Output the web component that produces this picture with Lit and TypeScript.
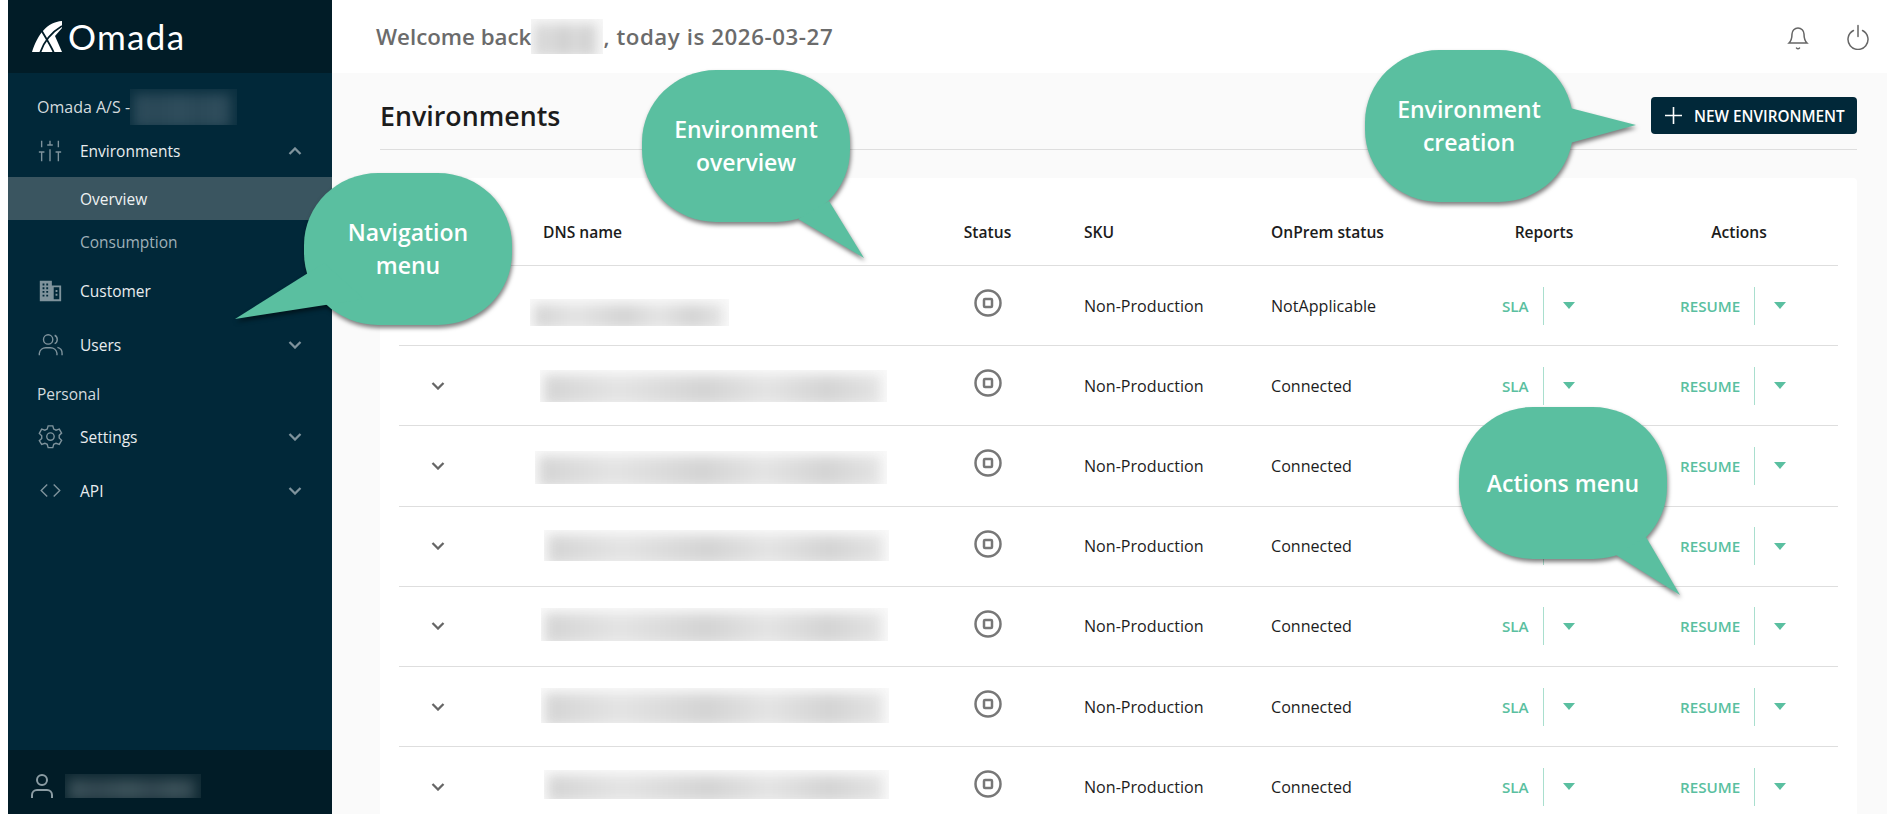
import { LitElement, html, css, svg } from "lit";
import { customElement, property } from "lit/decorators.js";

const chevron = (up = false) => html`<svg width="14" height="8" viewBox="0 0 14 8" fill="none" stroke="currentColor" stroke-width="2.3">
  <path d=${up ? "M1.5 7 7 1.5 12.5 7" : "M1.5 1 7 6.5 12.5 1"}></path></svg>`;

const navIcons: Record<string, unknown> = {
  sliders: svg`<path d="M4 3v7M4 15v10M1 15h6M13 3v4M13 12v13M10 7.5h6M22 3v7M22 15v10M19 15h6" />`,
  building: svg`<path fill="currentColor" stroke="none" fill-rule="evenodd" d="M2 3h13v5h10v17H2zM5 6v2h2V6zm4 0v2h2V6zM5 10v2h2v-2zm4 0v2h2v-2zm-4 4v2h2v-2zm4 0v2h2v-2zm-4 4v2h2v-2zm4 0v2h2v-2zm8-8v13h6V10zm2 3h2v2h-2zm0 4h2v2h-2z" />`,
  users: svg`<circle cx="11" cy="8" r="5" /><path d="M18 3.5a5 5 0 0 1 0 9M1.5 25v-2a7 7 0 0 1 7-6h5a7 7 0 0 1 7 6v2M21 16.5a6.500 6.500 0 0 1 5 6.500v2" />`,
  gear: svg`<circle cx="13.500" cy="13.500" r="4" /><path d="M11 2h5l1 3.500 2.500 1.200 3.500-1.200 2.500 4.300-2.600 2.500v2.800l2.600 2.500-2.500 4.300-3.500-1.200-2.500 1.200-1 3.500h-5l-1-3.500-2.500-1.200-3.500 1.200L1.500 18l2.600-2.500v-2.800L1.500 10.200 4 5.500l3.500 1.200L10 5.500z" />`,
  code: svg`<path d="M10 7 3.500 13.500 10 20M17 7l6.500 6.500L17 20" />`,
};

@customElement("call-out")
export class CallOut extends LitElement {
  static override styles = css`
    :host {
      position: absolute;
      display: flex;
      flex-direction: column;
      align-items: center;
      width: 208px;
      height: 152px;
      color: #fff;
      font-family: "Open Sans", "Noto Sans", sans-serif;
      font-size: 23px;
      font-weight: 600;
      line-height: 33px;
    }
    svg {
      position: absolute;
      inset: 0;
      overflow: visible;
      filter: drop-shadow(1px 3px 2px rgba(0, 0, 0, 0.5));
    }
    .label {
      position: relative;
      text-align: center;
      white-space: pre-line;
    }
  `;

  @property({ type: Number }) top = 0;
  @property({ type: Array }) tail: number[] = [];
  @property() text = "";

  override render() {
    return html`
      <svg width="208" height="152">
        <rect width="208" height="152" rx="74" ry="72" fill="#5abfa0"></rect>
        <polygon points=${this.tail.join(" ")} fill="#5abfa0"></polygon>
      </svg>
      <div class="label" style="margin-top:${this.top}px">${this.text}</div>
    `;
  }
}

// blur: left offset, width, height, top offset of the redacted host name
const rows = [
  { onprem: "NotApplicable", blur: [-13, 199, 27, 13] },
  { onprem: "Connected", blur: [-3, 347, 32, 0] },
  { onprem: "Connected", blur: [-8, 352, 33, 4] },
  { onprem: "Connected", blur: [1, 345, 31, -2] },
  { onprem: "Connected", blur: [-2, 347, 33, -4] },
  { onprem: "Connected", blur: [-2, 348, 35, -3] },
  { onprem: "Connected", blur: [1, 345, 29, -5] },
];

@customElement("app-root")
export class AppRoot extends LitElement {
  static override styles = css`
    :host {
      display: flex;
      position: relative;
      width: 1887px;
      height: 814px;
      overflow: hidden;
      background: #fff;
      padding-left: 8px;
      box-sizing: border-box;
      font-family: "Open Sans", "Noto Sans", sans-serif;
      color: #1c1c1c;
    }
    .sidebar {
      width: 324px;
      flex: none;
      display: flex;
      flex-direction: column;
      background: #012839;
      color: #e9edef;
      font-size: 15.500px;
    }
    .brand {
      height: 73px;
      flex: none;
      display: flex;
      align-items: center;
      gap: 6px;
      padding-left: 24px;
      background: #011c27;
      color: #fff;
    }
    .brand-name {
      font-family: Lato, sans-serif;
      font-size: 35px;
      line-height: 1;
      letter-spacing: 1.300px;
    }
    nav {
      flex: 1;
      padding-top: 16px;
    }
    .org {
      display: flex;
      align-items: center;
      height: 36px;
      padding-left: 29px;
      color: #d4dbde;
      font-size: 16px;
    }
    .org .smudge {
      width: 107px;
      height: 36px;
    }
    .item {
      display: flex;
      align-items: center;
      height: 54px;
      padding-left: 29px;
    }
    .item.first {
      height: 52px;
    }
    .item svg.icon {
      width: 26px;
      height: 26px;
      flex: none;
      margin-right: 17px;
      color: #7f939c;
      fill: none;
      stroke: currentColor;
      stroke-width: 1.500;
    }
    .item .name {
      flex: 1;
    }
    .item .caret {
      display: flex;
      margin-right: 30px;
      color: #7f939c;
    }
    .sub {
      display: flex;
      align-items: center;
      height: 43px;
      padding-left: 72px;
      color: #9fb0b8;
    }
    .sub.active {
      background: #3a5560;
      color: #eef2f3;
    }
    .sub.second {
      height: 44px;
    }
    .section {
      display: flex;
      align-items: center;
      height: 32px;
      margin-top: 6px;
      padding-left: 29px;
      color: #d4dbde;
    }
    .account {
      height: 64px;
      flex: none;
      display: flex;
      align-items: center;
      gap: 11px;
      padding: 8px 0 0 22px;
      box-sizing: border-box;
      background: #011c27;
      color: #8b9ca3;
    }
    .account .smudge {
      width: 136px;
      height: 24px;
    }
    .smudge {
      position: relative;
      overflow: hidden;
      flex: none;
      background: var(--tint);
    }
    .smudge::before {
      content: "";
      position: absolute;
      inset: 5px 6px -3px 4px;
      filter: blur(6px);
      background: linear-gradient(90deg, var(--ink) 0%, var(--ink2) 22%, var(--ink) 48%, var(--ink2) 66%, var(--ink) 84%, var(--ink2) 100%);
    }
    .sidebar .smudge {
      --tint: #0a2f3f;
      --ink: #2f4d5c;
      --ink2: #2a4857;
    }
    .account .smudge {
      --tint: #0e2832;
      --ink: #3b5159;
      --ink2: #31464f;
    }
    main {
      flex: 1;
      min-width: 0;
      display: flex;
      flex-direction: column;
      background: #fafafa;
    }
    .topbar {
      height: 73px;
      flex: none;
      display: flex;
      align-items: center;
      padding-left: 44px;
      background: #fff;
      color: #6b6b6b;
      font-size: 22.300px;
      font-weight: 600;
    }
    .topbar .smudge {
      --tint: #f8f8f8;
      --ink: #cfcfcf;
      --ink2: #dcdcdc;
      width: 72px;
      height: 35px;
    }
    .topbar .date {
      letter-spacing: 0.560px;
    }
    .topbar .tools {
      display: flex;
      gap: 36px;
      margin-left: auto;
      margin-right: 17px;
      color: #666;
    }
    .topbar svg {
      width: 24px;
      height: 26px;
      fill: none;
      stroke: currentColor;
      stroke-width: 1.500;
      stroke-linecap: round;
    }
    .content {
      flex: 1;
      padding: 0 30px 0 48px;
    }
    .title-row {
      display: flex;
      justify-content: space-between;
      align-items: flex-start;
      height: 77px;
      padding-top: 23px;
      box-sizing: border-box;
      border-bottom: 1px solid #dedede;
    }
    h1 {
      margin: 0;
      font-size: 26.800px;
      font-weight: 600;
      line-height: 40px;
    }
    .new-env {
      display: flex;
      align-items: center;
      gap: 12px;
      width: 206px;
      height: 37px;
      margin-top: 1px;
      padding: 0 0 0 14px;
      box-sizing: border-box;
      border: 0;
      border-radius: 4px;
      background: #012839;
      color: #fff;
      font-family: inherit;
      font-size: 15.300px;
      font-weight: 600;
      white-space: nowrap;
    }
    .new-env svg {
      flex: none;
      width: 17px;
      height: 17px;
      stroke: #fff;
      stroke-width: 1.600;
    }
    .card {
      margin-top: 28px;
      padding: 0 19px;
      background: #fff;
      border-radius: 4px;
    }
    .grid {
      display: grid;
      grid-template-columns: 144px 384px 121px 223px 199px 180px 188px;
      font-size: 16.100px;
    }
    .row {
      display: contents;
    }
    .cell {
      display: flex;
      align-items: center;
      height: 80.200px;
      box-sizing: border-box;
      border-bottom: 1px solid #dedede;
    }
    .head .cell {
      height: 88px;
      padding-top: 20px;
      font-size: 15.600px;
      font-weight: 600;
    }
    .center {
      justify-content: center;
    }
    .pad-sku {
      padding-left: 36px;
    }
    .toggle {
      padding-left: 32px;
      color: #666;
    }
    .status svg {
      margin-top: -5px;
      width: 28px;
      height: 28px;
      fill: none;
      stroke: #777;
      stroke-width: 2.500;
    }
    .head .reports {
      justify-content: center;
      padding-right: 32px;
    }
    .head .actions {
      justify-content: center;
      padding-right: 10px;
    }
    .split {
      display: flex;
      align-items: center;
      height: 38px;
      color: #5abfa0;
      font-size: 15.200px;
      font-weight: 600;
    }
    .reports .split {
      padding-left: 32px;
    }
    .actions .split {
      padding-left: 30px;
    }
    .split .label {
      padding-right: 14px;
    }
    .split .drop {
      display: flex;
      align-items: center;
      justify-content: center;
      align-self: stretch;
      width: 50px;
      border-left: 1px solid #a9dfce;
    }
    .split .drop::after {
      content: "";
      border: 6px solid transparent;
      border-top: 7px solid #5abfa0;
      border-bottom: 0;
    }
    .host {
      --tint: #fafafa;
      --ink: #d4d4d4;
      --ink2: #e4e4e4;
    }
  `;

  private navItem(icon: string, label: string, caret: "up" | "down" | "" = "down", first = false) {
    return html`<div class="item ${first ? "first" : ""}">
      <svg class="icon" viewBox="0 0 26 28">${navIcons[icon]}</svg>
      <span class="name">${label}</span>
      ${caret ? html`<span class="caret">${chevron(caret === "up")}</span>` : ""}
    </div>`;
  }

  private split(label: string) {
    return html`<div class="split"><span class="label">${label}</span><span class="drop"></span></div>`;
  }

  override render() {
    return html`
      <aside class="sidebar">
        <div class="brand">
          <svg width="30" height="32" viewBox="0 0 30 32">
            <path fill="#fff" d="M30 0C15 1 6 13 0 31h30L23 15l7-8z"></path>
            <path fill="none" stroke="#011c27" stroke-width="1.800" d="M8 7c6 10 11 18 14 25M30 5C20 11 12 20 8 32"></path>
          </svg>
          <span class="brand-name">Omada</span>
        </div>
        <nav>
          <div class="org">Omada A/S -<div class="smudge"></div></div>
          ${this.navItem("sliders", "Environments", "up", true)}
          <div class="sub active">Overview</div>
          <div class="sub second">Consumption</div>
          ${this.navItem("building", "Customer", "")}
          ${this.navItem("users", "Users")}
          <div class="section">Personal</div>
          ${this.navItem("gear", "Settings")}
          ${this.navItem("code", "API")}
        </nav>
        <div class="account">
          <svg width="24" height="26" viewBox="0 0 24 26" fill="none" stroke="currentColor" stroke-width="2">
            <circle cx="12" cy="7" r="5"></circle>
            <path d="M2 25v-3a5 5 0 0 1 5-5h10a5 5 0 0 1 5 5v3"></path>
          </svg>
          <div class="smudge"></div>
        </div>
      </aside>
      <main>
        <header class="topbar">
          <span>Welcome back</span><div class="smudge"></div><span class="date">, today is 2026-03-27</span>
          <div class="tools">
            <svg viewBox="0 0 24 26"><path d="M3 19c2-2 3-4 3-9a6 6 0 0 1 12 0c0 5 1 7 3 9zM10.500 24c1 1 2 1 3 0"></path></svg>
            <svg viewBox="0 0 24 26"><path d="M12 1.500v11M7.500 6.500a10 10 0 1 0 9 0"></path></svg>
          </div>
        </header>
        <section class="content">
          <div class="title-row">
            <h1>Environments</h1>
            <button class="new-env">
              <svg viewBox="0 0 17 17"><path d="M8.500 0v17M0 8.500h17"></path></svg>
              NEW ENVIRONMENT
            </button>
          </div>
          <div class="card">
            <div class="grid">
              <div class="row head">
                <div class="cell"></div>
                <div class="cell">DNS name</div>
                <div class="cell center">Status</div>
                <div class="cell pad-sku">SKU</div>
                <div class="cell">OnPrem status</div>
                <div class="cell reports">Reports</div>
                <div class="cell actions">Actions</div>
              </div>
              ${rows.map(
                (r) => html`<div class="row">
                  <div class="cell toggle">${chevron()}</div>
                  <div class="cell">
                    <div class="smudge host" style="margin-left:${r.blur[0]}px;width:${r.blur[1]}px;height:${r.blur[2]}px;margin-top:${r.blur[3]}px"></div>
                  </div>
                  <div class="cell center status">
                    <svg viewBox="0 0 28 28"><circle cx="14" cy="14" r="12.500"></circle><rect x="10" y="10" width="8" height="8" rx="1"></rect></svg>
                  </div>
                  <div class="cell pad-sku">Non-Production</div>
                  <div class="cell">${r.onprem}</div>
                  <div class="cell reports">${this.split("SLA")}</div>
                  <div class="cell actions">${this.split("RESUME")}</div>
                </div>`
              )}
            </div>
          </div>
        </section>
      </main>
      <call-out style="left:304px;top:173px" top="43" text=${"Navigation\nmenu"} .tail=${[-69, 146, 20, 90, 60, 126]}></call-out>
      <call-out style="left:642px;top:70px" top="43" text=${"Environment\noverview"} .tail=${[222, 188, 187, 131, 156, 149]}></call-out>
      <call-out style="left:1365px;top:50px" top="43" text=${"Environment\ncreation"} .tail=${[271, 75, 205, 58, 205, 93]}></call-out>
      <call-out style="left:1459px;top:407px" top="60" text="Actions menu" .tail=${[221, 188, 187, 130, 157, 148]}></call-out>
    `;
  }
}
